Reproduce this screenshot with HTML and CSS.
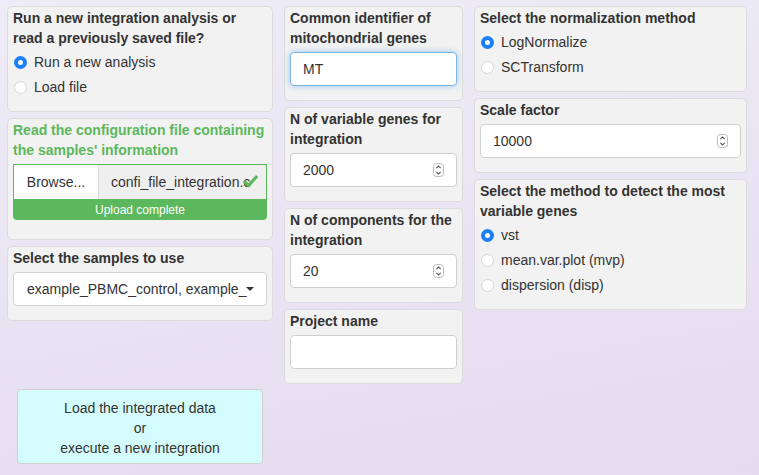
FILE: index.html
```html
<!DOCTYPE html>
<html>
<head>
<meta charset="utf-8">
<link rel="stylesheet" href="styles.css">
</head>
<body>
<div class="layout">
  <div class="col col-1">
    <div class="panel">
      <div class="title">Run a new integration analysis or read a previously saved file?</div>
      <div class="radio"><span class="dot checked"></span><span>Run a new analysis</span></div>
      <div class="radio"><span class="dot"></span><span>Load file</span></div>
    </div>
    <div class="panel panel-file">
      <div class="title green">Read the configuration file containing the samples' information</div>
      <div class="file-input">
        <div class="browse">Browse...</div>
        <div class="filename"><span class="fname-text">confi_file_integration.c</span>
          <svg class="check" width="15" height="13" viewBox="0 0 15 13"><path d="M1.8 7 L5.5 10.6 L13.2 2" fill="none" stroke="#5cb85c" stroke-width="3.2" stroke-linecap="round" stroke-linejoin="round"/></svg>
        </div>
      </div>
      <div class="progress">Upload complete</div>
    </div>
    <div class="panel">
      <div class="title">Select the samples to use</div>
      <div class="select"><span class="select-text">example_PBMC_control, example_</span><span class="caret"></span></div>
    </div>
    <div class="action">Load the integrated data<br>or<br>execute a new integration</div>
  </div>
  <div class="col col-2">
    <div class="panel">
      <div class="title">Common identifier of mitochondrial genes</div>
      <div class="input focus">MT</div>
    </div>
    <div class="panel">
      <div class="title">N of variable genes for integration</div>
      <div class="input number"><span>2000</span>
        <svg class="spin" width="11" height="14" viewBox="0 0 11 14"><rect x="0.5" y="0.5" width="10" height="13" rx="3" fill="#fff" stroke="#bbb"/><path d="M3.3 5.2 L5.5 3 L7.7 5.2 M3.3 8.8 L5.5 11 L7.7 8.8" fill="none" stroke="#555" stroke-width="1.1"/></svg>
      </div>
    </div>
    <div class="panel">
      <div class="title">N of components for the integration</div>
      <div class="input number"><span>20</span>
        <svg class="spin" width="11" height="14" viewBox="0 0 11 14"><rect x="0.5" y="0.5" width="10" height="13" rx="3" fill="#fff" stroke="#bbb"/><path d="M3.3 5.2 L5.5 3 L7.7 5.2 M3.3 8.8 L5.5 11 L7.7 8.8" fill="none" stroke="#555" stroke-width="1.1"/></svg>
      </div>
    </div>
    <div class="panel">
      <div class="title">Project name</div>
      <div class="input"></div>
    </div>
  </div>
  <div class="col col-3">
    <div class="panel">
      <div class="title">Select the normalization method</div>
      <div class="radio"><span class="dot checked"></span><span>LogNormalize</span></div>
      <div class="radio"><span class="dot"></span><span>SCTransform</span></div>
    </div>
    <div class="panel">
      <div class="title">Scale factor</div>
      <div class="input number"><span>10000</span>
        <svg class="spin" width="11" height="14" viewBox="0 0 11 14"><rect x="0.5" y="0.5" width="10" height="13" rx="3" fill="#fff" stroke="#bbb"/><path d="M3.3 5.2 L5.5 3 L7.7 5.2 M3.3 8.8 L5.5 11 L7.7 8.8" fill="none" stroke="#555" stroke-width="1.1"/></svg>
      </div>
    </div>
    <div class="panel">
      <div class="title">Select the method to detect the most variable genes</div>
      <div class="radio"><span class="dot checked"></span><span>vst</span></div>
      <div class="radio"><span class="dot"></span><span>mean.var.plot (mvp)</span></div>
      <div class="radio"><span class="dot"></span><span>dispersion (disp)</span></div>
    </div>
  </div>
</div>
</body>
</html>
```
FILE: styles.css
```css
html, body {
  margin: 0;
  height: 100%;
}
body {
  background: linear-gradient(170deg, #eeecf7 0%, #e9e4f3 50%, #e3dbee 100%);
  font-family: "Liberation Sans", Arial, sans-serif;
  font-size: 14px;
  color: #333;
  overflow: hidden;
}
.layout {
  display: flex;
  gap: 11px;
  padding: 6px 7px;
  align-items: flex-start;
}
.col {
  display: flex;
  flex-direction: column;
  gap: 6px;
}
.col-1 { width: 266px; }
.col-2 { width: 179px; }
.col-3 { width: 273px; }
.panel {
  background: #f2f2f2;
  border: 1px solid #dcdcdc;
  border-radius: 5px;
  padding: 1px 5px 14px;
}
.title {
  font-weight: bold;
  line-height: 20px;
  margin-bottom: 4px;
}
.title.green { color: #5cb85c; }
.radio {
  display: flex;
  align-items: center;
  height: 20px;
  line-height: 20px;
  margin-bottom: 5px;
}
.radio:last-child { margin-bottom: 0; }
.dot {
  width: 13px;
  height: 13px;
  box-sizing: border-box;
  border-radius: 50%;
  background: #fff;
  border: 1px solid #d6d6d6;
  margin: 0 7px 0 1px;
  flex: none;
}
.dot.checked {
  background: #fff;
  border: 4px solid #1b7ff5;
}
.file-input {
  display: flex;
  height: 36px;
  box-sizing: border-box;
  border: 1px solid #5cb85c;
}
.browse {
  width: 84px;
  background: #fff;
  display: flex;
  align-items: center;
  justify-content: center;
  border-right: 1px solid #ddd;
}
.filename {
  flex: 1;
  background: #efefef;
  display: flex;
  align-items: center;
  padding-left: 12px;
  position: relative;
  white-space: nowrap;
}
.check {
  position: absolute;
  right: 8px;
  top: 10px;
}
.progress {
  height: 20px;
  line-height: 20px;
  background: #5cb85c;
  color: #fff;
  font-size: 12px;
  text-align: center;
  border-radius: 0 0 4px 4px;
  margin-bottom: 5px;
}
.select {
  height: 34px;
  box-sizing: border-box;
  background: #fff;
  border: 1px solid #d3d3d3;
  border-radius: 4px;
  display: flex;
  align-items: center;
  padding: 0 13px 0 13px;
  white-space: nowrap;
}
.caret {
  margin-left: auto;
  width: 0;
  height: 0;
  border-left: 4px solid transparent;
  border-right: 4px solid transparent;
  border-top: 4px solid #333;
}
.input {
  height: 34px;
  box-sizing: border-box;
  background: #fff;
  border: 1px solid #cfcfcf;
  border-radius: 4px;
  display: flex;
  align-items: center;
  padding: 0 12px;
}
.input.focus {
  border-color: #7ab6ea;
  box-shadow: 0 0 6px rgba(102, 175, 233, 0.6);
}
.input.number { justify-content: space-between; padding-right: 12px; }
.spin { flex: none; }
.action {
  margin: 62px 10px 0 10px;
  background: #d5fcfc;
  border: 1px solid #cfcfcf;
  border-radius: 4px;
  text-align: center;
  line-height: 20px;
  padding: 8px 0 5px;
}
```
